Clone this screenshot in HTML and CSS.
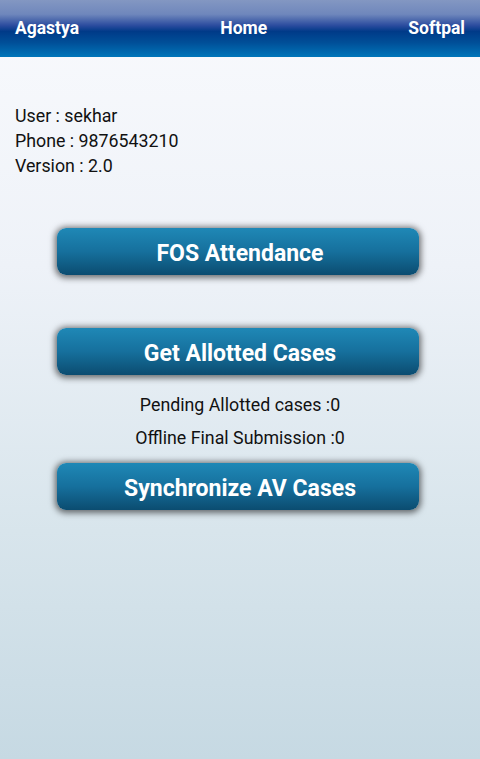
FILE: index.html
```html
<!DOCTYPE html>
<html>
<head>
    <title>Home</title>
    <meta charset="utf-8">
    <link rel="stylesheet" href="styles.css">
</head>
<body>
<div class="header">
    <span class="title">Agastya</span>
    <span class="title">Home</span>
    <span class="title">Softpal</span>
</div>

<div class="content">
    <div class="info">
        <div>User : sekhar</div>
        <div>Phone : 9876543210</div>
        <div>Version : 2.0</div>
    </div>

    <button class="action first">FOS Attendance</button>
    <button class="action second">Get Allotted Cases</button>

    <div class="counts">
        <div>Pending Allotted cases :0</div>
        <div>Offline Final Submission :0</div>
    </div>

    <button class="action">Synchronize AV Cases</button>
</div>
</body>
</html>
```

FILE: styles.css
```css
html, body {
    height: 100%;
}

body {
    margin: 0;
    font-family: Roboto, "Noto Sans", sans-serif;
    color: #111;
    background: linear-gradient(to bottom, #f9fafd 0%, #eef2f8 35%, #d8e5ec 70%, #c6d9e3 100%);
    display: flex;
    flex-direction: column;
}

.header {
    height: 57px;
    display: flex;
    justify-content: space-between;
    align-items: flex-start;
    padding: 0 15px 0 15px;
    background: linear-gradient(to bottom, #8397c2 0%, #6f87bc 25%, #2a4b9e 45%, #003a88 55%, #004f98 75%, #0076ba 100%);
}

.header .title {
    color: #fff;
    font-weight: bold;
    font-size: 17.5px;
    line-height: 20px;
    margin-top: 18px;
}

.content {
    flex: 1;
    display: flex;
    flex-direction: column;
    align-items: center;
}

.info {
    align-self: stretch;
    padding: 46px 15px 0 15px;
    font-size: 17.8px;
    line-height: 25px;
}

.action {
    width: 362px;
    height: 47px;
    margin-right: 4px;
    border: none;
    border-radius: 9px;
    color: #fff;
    font-family: Roboto, "Noto Sans", sans-serif;
    font-weight: bold;
    font-size: 23px;
    background: linear-gradient(to bottom, #1f88b6 0%, #16709d 50%, #0b4c70 100%);
    box-shadow: 0 1px 6px 2px rgba(0, 0, 0, 0.55);
    padding: 4px 0 0 4px;
}

.action.first {
    margin-top: 50px;
}

.action.second {
    margin-top: 53px;
}

.counts {
    font-size: 17.8px;
    line-height: 33px;
    text-align: center;
    margin: 13px 0 9px 0;
}
```
